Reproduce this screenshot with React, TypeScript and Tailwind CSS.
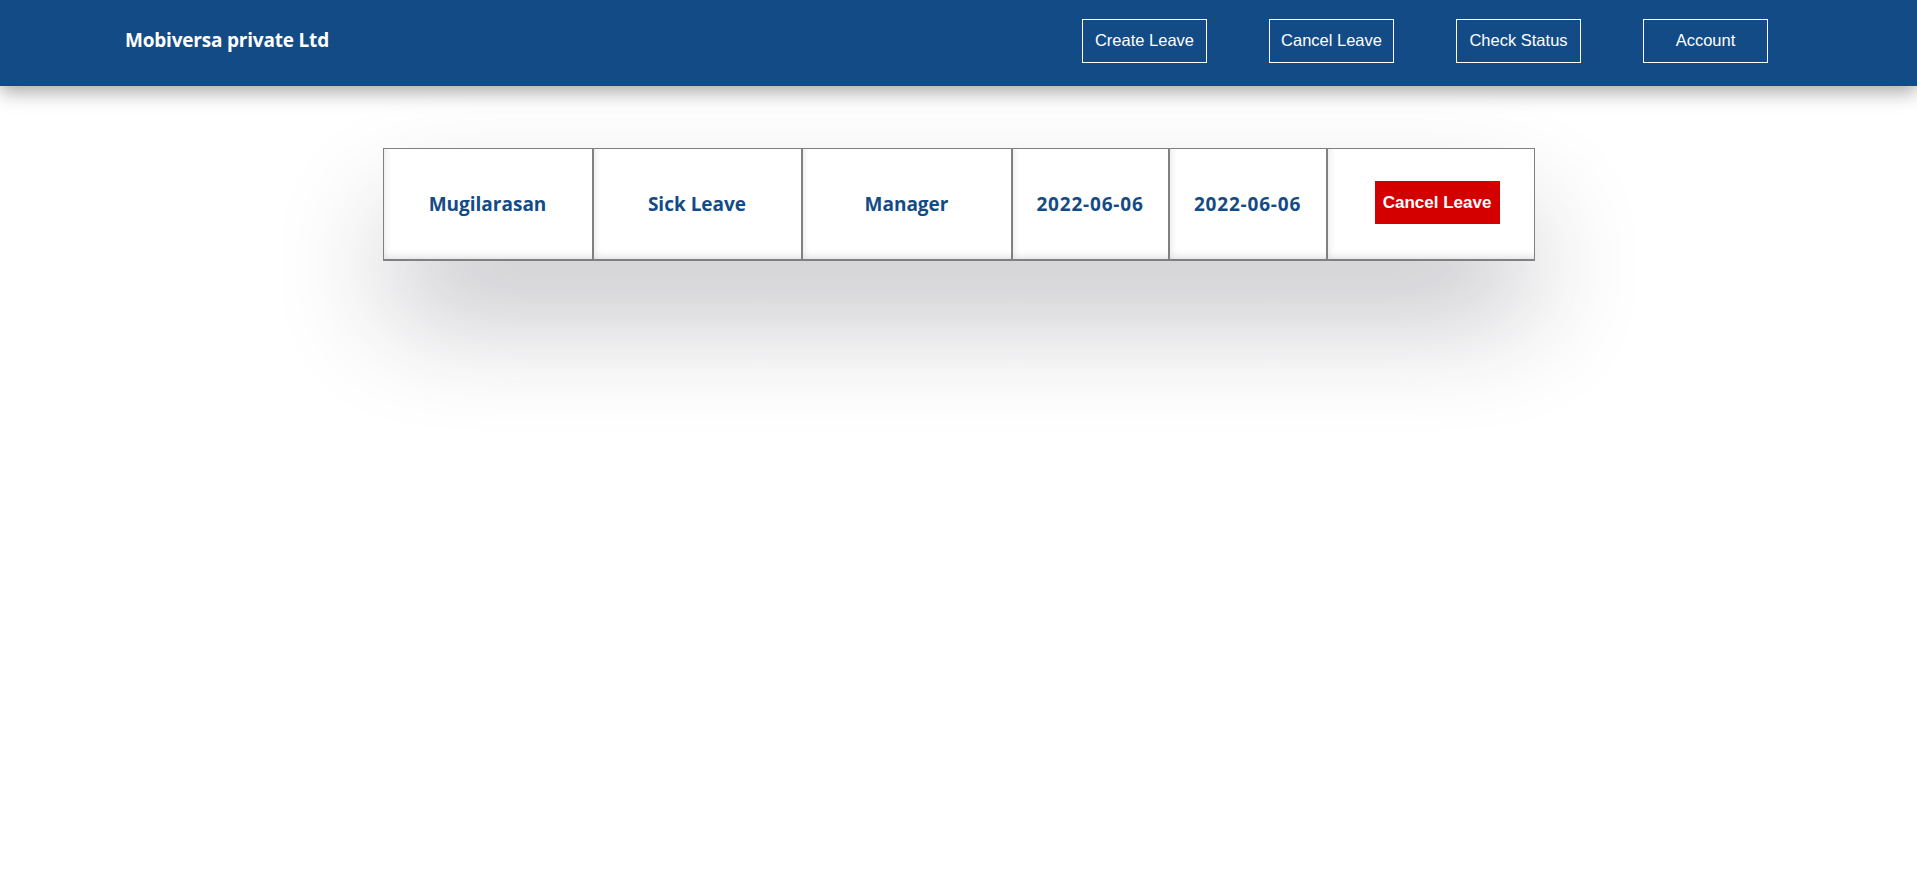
const navItems = ['Create Leave', 'Cancel Leave', 'Check Status', 'Account'];

const leave = {
  name: 'Mugilarasan',
  type: 'Sick Leave',
  approver: 'Manager',
  from: '2022-06-06',
  to: '2022-06-06',
};

function Header() {
  return (
    <header className="h-[86px] bg-[#134b86] flex items-center justify-between pl-[125px] pr-[149px] pb-[5px] shadow-[0_6px_18px_rgba(0,0,0,0.35)] relative z-10">
      <h1 className="text-white font-bold text-[19px] font-['Open_Sans',sans-serif] tracking-[-0.2px]">
        Mobiversa private Ltd
      </h1>
      <nav className="flex gap-[62px]">
        {navItems.map((item) => (
          <button
            key={item}
            className="w-[125px] h-[44px] border border-white text-white text-[16.5px] font-['Liberation_Sans',Arial,sans-serif]"
          >
            {item}
          </button>
        ))}
      </nav>
    </header>
  );
}

function Cell({ children, w, extra = '' }: { children: React.ReactNode; w: string; extra?: string }) {
  return (
    <div
      className={`${w} flex items-center justify-center border-l-2 border-[#808080] first:border-l-0 text-[#134b86] font-bold text-[19px] font-['Open_Sans',sans-serif] shadow-[inset_4px_-6px_8px_-5px_rgba(60,60,90,0.2)] ${extra}`}
    >
      {children}
    </div>
  );
}

export default function App() {
  return (
    <div className="min-h-screen bg-white">
      <Header />
      <main className="pt-[62px]">
        <div className="mx-auto w-[1152px] h-[113px] flex border border-b-2 border-[#808080] bg-white shadow-[0_60px_115px_-10px_rgba(30,30,50,0.3)]">
          <Cell w="w-[208px]">{leave.name}</Cell>
          <Cell w="w-[209px]">{leave.type}</Cell>
          <Cell w="w-[210px]">{leave.approver}</Cell>
          <Cell w="w-[157px]" extra="tracking-[0.8px]">{leave.from}</Cell>
          <Cell w="w-[158px]" extra="tracking-[0.8px]">{leave.to}</Cell>
          <Cell w="flex-1" extra="!justify-start pl-[47px]">
            <button className="w-[125px] h-[43px] mb-[3px] bg-[#d40000] text-white font-bold text-[17px] font-['Liberation_Sans',Arial,sans-serif]">
              Cancel Leave
            </button>
          </Cell>
        </div>
      </main>
    </div>
  );
}
